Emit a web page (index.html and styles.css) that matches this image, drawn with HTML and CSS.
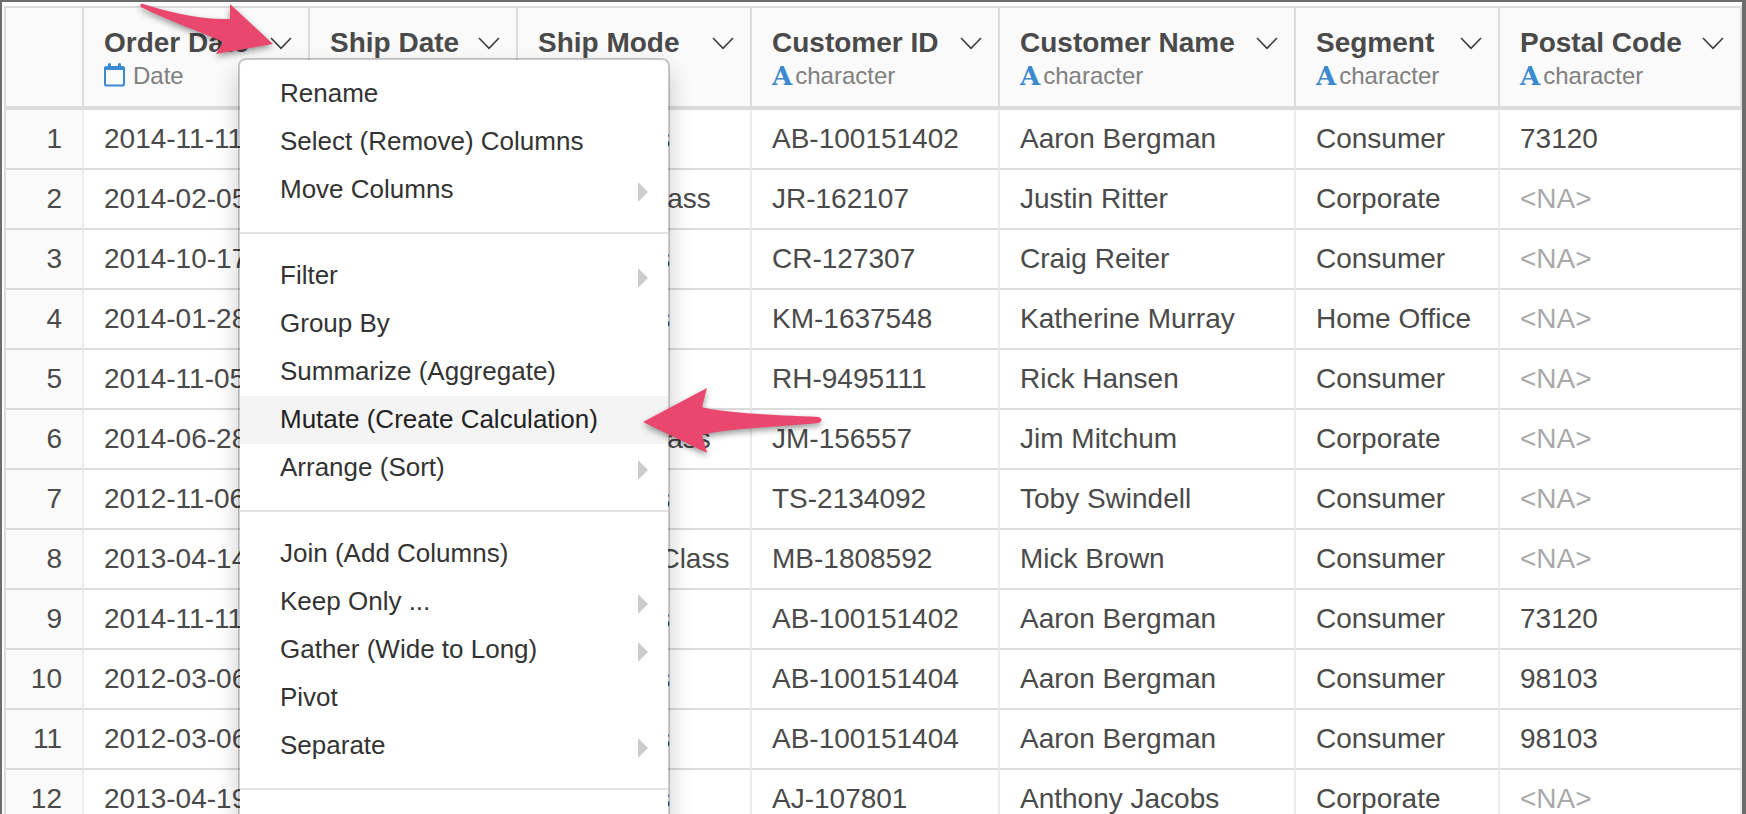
FILE: index.html
```html
<!DOCTYPE html>
<html lang="en">

<head>
  <meta charset="UTF-8">
  <meta name="viewport" content="width=device-width, initial-scale=1.0">
  <title>Orders</title>
  <link rel="stylesheet" href="styles.css">
</head>

<body>

  <svg class="sprite" width="0" height="0" aria-hidden="true">
    <symbol id="chevron" viewBox="0 0 22 18">
      <path d="M1 4 L11 14.300 L21 4" fill="none" stroke="#3c3c3c" stroke-width="1.600" />
    </symbol>
    <symbol id="calendar" viewBox="0 0 26 26">
      <path fill="#3b8ad0" fill-rule="evenodd" d="M4 3 V1 Q5.500 -1 7 1 V3 H14 V1 Q15.500 -1 17 1 V3 H19 Q21 3 21 5 V21 Q21 23.500 19 23.500 H2 Q0 23.500 0 21 V5 Q0 3 2 3 Z M2 7 V20.500 Q2 21.500 3 21.500 H18 Q19 21.500 19 20.500 V7 Z" />
    </symbol>
  </svg>

  <table class="grid">
    <colgroup>
      <col class="col-num">
      <col class="col-order">
      <col class="col-ship">
      <col class="col-mode">
      <col class="col-id">
      <col class="col-name">
      <col class="col-segment">
      <col class="col-postal">
    </colgroup>
    <thead>
      <tr>
        <th></th>
        <th class="open">
          <div class="head"><span>Order Date</span><button class="toggle" aria-label="Order Date menu" aria-expanded="true"><svg><use href="#chevron" /></svg></button></div>
          <div class="type"><svg class="calendar"><use href="#calendar" /></svg>Date</div>

          <ul class="menu">
            <li><button>Rename</button></li>
            <li><button>Select (Remove) Columns</button></li>
            <li><button class="sub">Move Columns</button></li>
            <li class="divider"></li>
            <li><button class="sub">Filter</button></li>
            <li><button>Group By</button></li>
            <li><button>Summarize (Aggregate)</button></li>
            <li class="active">
              <button>Mutate (Create Calculation)</button>
              <svg class="arrow arrow-item" viewBox="636 384 192 76" aria-hidden="true">
                <path d="M643 422 L707 388 L702 407 C718 412 765 415 819 417 Q824 420 819 423 C775 427 725 429 702 435 L707 453 Z" />
              </svg>
            </li>
            <li><button class="sub">Arrange (Sort)</button></li>
            <li class="divider"></li>
            <li><button>Join (Add Columns)</button></li>
            <li><button class="sub">Keep Only ...</button></li>
            <li><button class="sub">Gather (Wide to Long)</button></li>
            <li><button>Pivot</button></li>
            <li><button class="sub">Separate</button></li>
            <li class="divider"></li>
          </ul>

          <svg class="arrow arrow-head" viewBox="136 0 144 64" aria-hidden="true">
            <path d="M143 4 C168 12 200 20 230 19 L230 4 L273 44 L216 54 L223 42 C205 33 168 21 141 7 Q139 3 143 4 Z" />
          </svg>
        </th>
        <th>
          <div class="head"><span>Ship Date</span><button class="toggle" aria-label="Ship Date menu"><svg><use href="#chevron" /></svg></button></div>
        </th>
        <th>
          <div class="head"><span>Ship Mode</span><button class="toggle" aria-label="Ship Mode menu"><svg><use href="#chevron" /></svg></button></div>
        </th>
        <th>
          <div class="head"><span>Customer ID</span><button class="toggle" aria-label="Customer ID menu"><svg><use href="#chevron" /></svg></button></div>
          <div class="type"><b>A</b>character</div>
        </th>
        <th>
          <div class="head"><span>Customer Name</span><button class="toggle" aria-label="Customer Name menu"><svg><use href="#chevron" /></svg></button></div>
          <div class="type"><b>A</b>character</div>
        </th>
        <th>
          <div class="head"><span>Segment</span><button class="toggle" aria-label="Segment menu"><svg><use href="#chevron" /></svg></button></div>
          <div class="type"><b>A</b>character</div>
        </th>
        <th>
          <div class="head"><span>Postal Code</span><button class="toggle" aria-label="Postal Code menu"><svg><use href="#chevron" /></svg></button></div>
          <div class="type"><b>A</b>character</div>
        </th>
      </tr>
    </thead>
    <tbody>
      <tr><td>1</td><td>2014-11-11</td><td></td><td>First Class</td><td>AB-100151402</td><td>Aaron Bergman</td><td>Consumer</td><td>73120</td></tr>
      <tr><td>2</td><td>2014-02-05</td><td></td><td>Second Class</td><td>JR-162107</td><td>Justin Ritter</td><td>Corporate</td><td class="na">&lt;NA&gt;</td></tr>
      <tr><td>3</td><td>2014-10-17</td><td></td><td>First Class</td><td>CR-127307</td><td>Craig Reiter</td><td>Consumer</td><td class="na">&lt;NA&gt;</td></tr>
      <tr><td>4</td><td>2014-01-28</td><td></td><td>First Class</td><td>KM-1637548</td><td>Katherine Murray</td><td>Home Office</td><td class="na">&lt;NA&gt;</td></tr>
      <tr><td>5</td><td>2014-11-05</td><td></td><td></td><td>RH-9495111</td><td>Rick Hansen</td><td>Consumer</td><td class="na">&lt;NA&gt;</td></tr>
      <tr><td>6</td><td>2014-06-28</td><td></td><td>Second Class</td><td>JM-156557</td><td>Jim Mitchum</td><td>Corporate</td><td class="na">&lt;NA&gt;</td></tr>
      <tr><td>7</td><td>2012-11-06</td><td></td><td>First Class</td><td>TS-2134092</td><td>Toby Swindell</td><td>Consumer</td><td class="na">&lt;NA&gt;</td></tr>
      <tr><td>8</td><td>2013-04-14</td><td></td><td>Standard Class</td><td>MB-1808592</td><td>Mick Brown</td><td>Consumer</td><td class="na">&lt;NA&gt;</td></tr>
      <tr><td>9</td><td>2014-11-11</td><td></td><td>First Class</td><td>AB-100151402</td><td>Aaron Bergman</td><td>Consumer</td><td>73120</td></tr>
      <tr><td>10</td><td>2012-03-06</td><td></td><td>First Class</td><td>AB-100151404</td><td>Aaron Bergman</td><td>Consumer</td><td>98103</td></tr>
      <tr><td>11</td><td>2012-03-06</td><td></td><td>First Class</td><td>AB-100151404</td><td>Aaron Bergman</td><td>Consumer</td><td>98103</td></tr>
      <tr><td>12</td><td>2013-04-19</td><td></td><td>First Class</td><td>AJ-107801</td><td>Anthony Jacobs</td><td>Corporate</td><td class="na">&lt;NA&gt;</td></tr>
    </tbody>
  </table>

</body>

</html>
```
FILE: styles.css
```css
* {
  box-sizing: border-box;
}

body {
  margin: 0;
  height: 100vh;
  overflow: hidden;
  padding: 4px 0 0 2px;
  border: solid #6c6c6c;
  border-width: 2px 4px 0 2px;
  background: #fff;
  color: #4a4a4a;
  font-family: "Helvetica Neue", "Liberation Sans", Arial, sans-serif;
  font-size: 28px;
}

button {
  padding: 0;
  border: 0;
  background: none;
  color: inherit;
  font: inherit;
  cursor: pointer;
}

.sprite {
  position: absolute;
}

/* Table */
.grid {
  width: 100%;
  table-layout: fixed;
  border-collapse: separate;
  border-spacing: 0;
}

.col-num {
  width: 80px;
}

.col-order {
  width: 226px;
}

.col-ship {
  width: 208px;
}

.col-mode {
  width: 234px;
}

.col-id {
  width: 248px;
}

.col-name {
  width: 296px;
}

.col-segment {
  width: 204px;
}

.col-postal {
  width: 242px;
}

th {
  height: 104px;
  padding: 17px 16px 12px 20px;
  border: solid #dcdcdc;
  border-width: 2px 2px 4px 0;
  background: #fafafa;
  text-align: left;
  vertical-align: top;
  white-space: nowrap;
}

td {
  height: 60px;
  padding: 0 20px;
  border-right: 2px solid #ececec;
  border-bottom: 2px solid #dcdcdc;
  line-height: 58px;
  white-space: nowrap;
}

th:first-child,
td:first-child {
  border-left: 2px solid #dcdcdc;
}

td:first-child {
  background: #fafafa;
  text-align: right;
}

.na {
  color: #a9a9a9;
}

.head {
  display: flex;
  justify-content: space-between;
  align-items: center;
  line-height: 36px;
}

.toggle {
  display: flex;
}

.toggle svg {
  width: 22px;
  height: 18px;
}

.type {
  display: flex;
  align-items: center;
  gap: 3px;
  color: #808080;
  font-size: 24px;
  font-weight: normal;
  line-height: 30px;
}

.type b {
  color: #3b8ad0;
  font-family: "DejaVu Serif", serif;
  font-size: 26px;
}

.calendar {
  width: 26px;
  height: 26px;
}

/* Column menu */
.open {
  position: relative;
  z-index: 1;
}

.menu {
  position: absolute;
  top: 50px;
  left: 154px;
  width: 432px;
  margin: 0;
  padding: 10px 0 40px;
  border: 2px solid rgba(0, 0, 0, 0.2);
  border-radius: 8px;
  background: #fff;
  background-clip: padding-box;
  box-shadow: 0 12px 24px rgba(0, 0, 0, 0.2);
  color: #333;
  font-size: 26px;
  font-weight: normal;
  list-style: none;
}

.menu button {
  display: flex;
  justify-content: space-between;
  align-items: flex-start;
  width: 100%;
  padding: 0 20px 2px 40px;
  line-height: 46px;
}

.sub::after {
  content: "";
  margin-top: 16px;
  border: solid transparent;
  border-width: 10px 0 10px 10px;
  border-left-color: #ccc;
}

.divider {
  height: 2px;
  margin: 18px 0;
  background: #e4e4e4;
}

.active {
  position: relative;
  background: #f4f4f4;
  color: #222;
}

/* Pointer arrows */
.arrow {
  position: absolute;
  fill: #ea476f;
  filter: drop-shadow(0 3px 3px rgba(0, 0, 0, 0.4));
  pointer-events: none;
}

.arrow-item {
  top: -12px;
  left: 396px;
  width: 192px;
  height: 76px;
}

.arrow-head {
  top: -8px;
  left: 52px;
  width: 144px;
  height: 64px;
}
```
